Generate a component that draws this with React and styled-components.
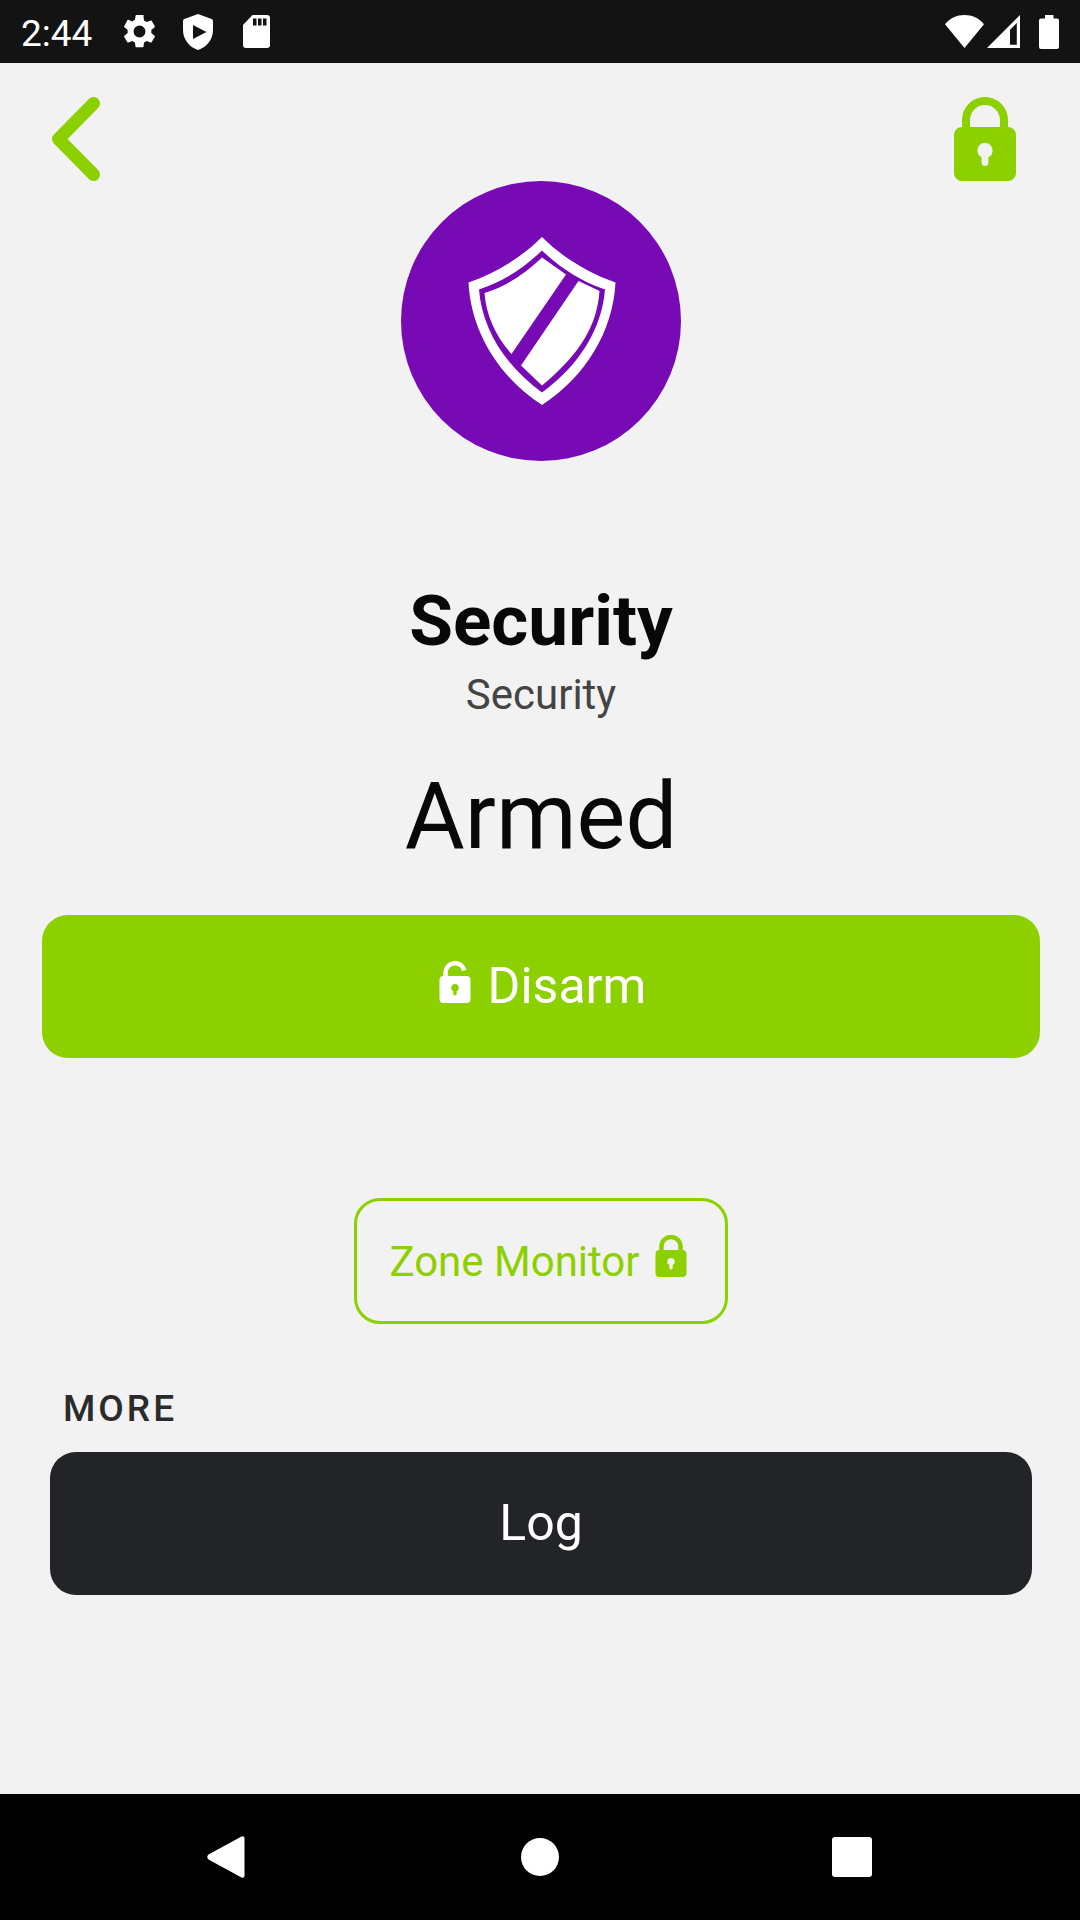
import React from "react";
import styled, { createGlobalStyle, css } from "styled-components";

const GlobalStyle = createGlobalStyle`
  * {
    box-sizing: border-box;
  }

  body {
    margin: 0;
    background: #f2f2f2;
    font-family: Roboto, "Liberation Sans", sans-serif;
  }

  button {
    font-family: inherit;
    border: none;
    padding: 0;
    background: none;
    cursor: pointer;
  }

  svg {
    display: block;
    flex-shrink: 0;
  }
`;

const Page = styled.div`
  min-height: 100vh;
  display: flex;
  flex-direction: column;
`;

const StatusBar = styled.header`
  height: 63px;
  padding: 0 21px;
  display: flex;
  justify-content: space-between;
  align-items: center;
  background: #131313;
  color: white;
`;

const StatusGroup = styled.div`
  display: flex;
  align-items: center;
  gap: ${({ $gap }) => $gap}px;
`;

const Clock = styled.time`
  font-size: 37px;
  line-height: 44px;
  padding-top: 4px;
  margin-right: 4px;
`;

const Content = styled.main`
  flex: 1;
  display: flex;
  flex-direction: column;
  align-items: center;
  padding: 34px 40px 40px 42px;
`;

const TopBar = styled.div`
  width: 100%;
  padding: 0 24px 0 10px;
  display: flex;
  justify-content: space-between;
`;

const IconButton = styled.button`
  color: #8dd000;
`;

const DeviceBadge = styled.div`
  width: 280px;
  height: 280px;
  padding-left: 2px;
  border-radius: 50%;
  background: #780ab5;
  color: white;
  display: flex;
  justify-content: center;
  align-items: center;
`;

const Title = styled.h1`
  margin: 118px 0 0;
  font-size: 71px;
  line-height: 84px;
  font-weight: 700;
  color: #080808;
`;

const Subtitle = styled.div`
  font-size: 42px;
  line-height: 50px;
  margin-top: 7px;
  color: #444444;
`;

const Status = styled.div`
  font-size: 92px;
  line-height: 110px;
  margin-top: 42px;
  color: #080808;
`;

const Button = styled.button`
  width: 100%;
  height: 143px;
  padding-bottom: 2px;
  border-radius: 26px;
  display: flex;
  justify-content: center;
  align-items: center;
  gap: 17px;
  font-size: 50px;
  line-height: 58px;
  color: white;

  svg {
    margin-bottom: 8px;
  }

  ${({ $dark }) =>
    $dark
      ? css`
          background: #232427;
        `
      : css`
          background: #8dd000;
          margin-top: 43px;
          padding-left: 3px;
        `}
`;

const ZoneButton = styled.button`
  height: 126px;
  margin-top: 140px;
  padding: 2px 38px 0 32px;
  border: 3px solid #8dd000;
  border-radius: 26px;
  display: flex;
  align-items: center;
  gap: 15px;
  font-size: 42px;
  line-height: 50px;
  color: #8dd000;

  svg {
    margin-bottom: 12px;
  }
`;

const MoreSection = styled.section`
  width: 100%;
  padding: 0 8px;
  margin-top: 64px;
`;

const SectionTitle = styled.h2`
  margin: 0 0 22px;
  padding-left: 13px;
  font-size: 37px;
  line-height: 42px;
  font-weight: 500;
  letter-spacing: 3px;
  text-transform: uppercase;
  color: #2b2b2b;
`;

const NavBar = styled.nav`
  height: 126px;
  display: grid;
  grid-template-columns: repeat(3, 312px);
  justify-content: center;
  background: black;
  color: white;
`;

const NavButton = styled.button`
  color: white;
  display: flex;
  justify-content: center;
  align-items: center;
`;

const GearIcon = () => (
  <svg width="33" height="33" viewBox="2 2 20 20" fill="currentColor">
    <path d="M19.14 12.94c.04-.3.06-.61.06-.94s-.02-.64-.07-.94l2.03-1.58a.49.49 0 0 0 .12-.61l-1.92-3.32a.49.49 0 0 0-.59-.22l-2.39.96a7 7 0 0 0-1.62-.94l-.36-2.54A.48.48 0 0 0 13.92 2h-3.84a.48.48 0 0 0-.47.41l-.36 2.54c-.59.24-1.13.57-1.62.94l-2.39-.96a.48.48 0 0 0-.59.22L2.74 8.87a.48.48 0 0 0 .12.61l2.03 1.58c-.05.3-.09.63-.09.94s.02.64.07.94l-2.03 1.58a.49.49 0 0 0-.12.61l1.92 3.32c.12.22.37.29.59.22l2.39-.96c.5.38 1.03.7 1.62.94l.36 2.54c.05.24.24.41.48.41h3.84c.24 0 .44-.17.47-.41l.36-2.54c.59-.24 1.13-.56 1.62-.94l2.39.96c.22.08.47 0 .59-.22l1.92-3.32a.48.48 0 0 0-.12-.61zM12 15.6a3.6 3.6 0 1 1 0-7.2 3.6 3.6 0 0 1 0 7.2z" />
  </svg>
);

const PlayShieldIcon = () => (
  <svg width="30" height="36" viewBox="0 0 30 36">
    <path
      d="M15 0 28.600 5Q30 5.600 30 7V16C30 26 23 33.500 15 36 7 33.500 0 26 0 16V7Q0 5.600 1.400 5z"
      fill="currentColor"
    />
    <path d="M10 11v14l13.500-7z" fill="#131313" />
  </svg>
);

const SdCardIcon = () => (
  <svg width="33" height="33" viewBox="-3 0 33 33">
    <path
      d="M9.500 0H24a3 3 0 0 1 3 3v27a3 3 0 0 1-3 3H3a3 3 0 0 1-3-3V10z"
      fill="currentColor"
    />
    <path d="M10 3.500h3.500v7H10zM15 3.500h3.500v7H15zM20 3.500h3.500v7H20z" fill="#131313" />
  </svg>
);

const WifiIcon = () => (
  <svg width="39" height="33" viewBox="0 0 39 33" fill="currentColor">
    <path d="M19.500 33 0 9.200C5 3 12 0 19.500 0S34 3 39 9.200z" />
  </svg>
);

const SignalIcon = () => (
  <svg width="33" height="33" viewBox="0 0 33 33" fill="currentColor" fillRule="evenodd">
    <path d="M33 0v33H0zM29.800 8 23 14.800V29.800H29.800z" />
  </svg>
);

const BatteryIcon = () => (
  <svg width="20" height="34" viewBox="0 0 20 34" fill="currentColor">
    <path d="M6 0h8.500v3.500H18a2 2 0 0 1 2 2V32a2 2 0 0 1-2 2H2a2 2 0 0 1-2-2V5.500a2 2 0 0 1 2-2h4z" />
  </svg>
);

const BackIcon = () => (
  <svg width="48" height="84" viewBox="0 0 48 84" fill="none">
    <path
      d="M41.500 6.500 6.500 42 41.500 77.500"
      stroke="currentColor"
      strokeWidth="13"
      strokeLinecap="round"
      strokeLinejoin="round"
    />
  </svg>
);

const LockIcon = ({ width, height, open, weight = 8 }) => (
  <svg width={width} height={height} viewBox="0 0 62 84" fill="currentColor">
    <path
      fillRule="evenodd"
      d="M8 30H54a8 8 0 0 1 8 8V76a8 8 0 0 1-8 8H8a8 8 0 0 1-8-8V38a8 8 0 0 1 8-8zM31 46a7.500 7.500 0 0 0-3.400 14.200V65.500a3.400 3.400 0 0 0 6.800 0V60.200A7.500 7.500 0 0 0 31 46z"
    />
    <path
      d={open ? "M12 32V23A19 19 0 0 1 49.500 19" : "M12 32V23a19 19 0 0 1 38 0V32"}
      fill="none"
      stroke="currentColor"
      strokeWidth={weight}
    />
  </svg>
);

const ShieldIcon = () => (
  <svg width="148" height="168" viewBox="0 0 148 168" fill="currentColor">
    <path
      fillRule="evenodd"
      d="M74 0C94 20 120 36 147.500 45.500C145 95 117 140 74 168C31 140 3 95 .5 45.500C28 36 54 20 74 0zM74 13.500C57 30 35 45 11 52.500C14 91 36 128 74 155.500C112 128 134 91 137 52.500C114 45 92 31 74 13.500z"
    />
    <path d="M74 20.500 98 37.500 43.500 117C28 100 18 78 16.500 56C38 49 56 38 74 20.500z" />
    <path d="M110.500 44 131.500 54C129 88 113 116 74 148.500L53 128.500z" />
  </svg>
);

function App() {
  return (
    <>
      <GlobalStyle />
      <Page>
        <StatusBar>
          <StatusGroup $gap={27}>
            <Clock>2:44</Clock>
            <GearIcon />
            <PlayShieldIcon />
            <SdCardIcon />
          </StatusGroup>
          <StatusGroup $gap={19}>
            <StatusGroup $gap={3}>
              <WifiIcon />
              <SignalIcon />
            </StatusGroup>
            <BatteryIcon />
          </StatusGroup>
        </StatusBar>

        <Content>
          <TopBar>
            <IconButton aria-label="Back">
              <BackIcon />
            </IconButton>
            <IconButton aria-label="Locked">
              <LockIcon width={62} height={84} />
            </IconButton>
          </TopBar>

          <DeviceBadge>
            <ShieldIcon />
          </DeviceBadge>
          <Title>Security</Title>
          <Subtitle>Security</Subtitle>
          <Status>Armed</Status>

          <Button>
            <LockIcon width={32} height={42} weight={9} open />
            Disarm
          </Button>

          <ZoneButton>
            Zone Monitor
            <LockIcon width={32} height={42} weight={9} />
          </ZoneButton>

          <MoreSection>
            <SectionTitle>More</SectionTitle>
            <Button $dark>Log</Button>
          </MoreSection>
        </Content>

        <NavBar>
          <NavButton aria-label="Back">
            <svg width="42" height="42" viewBox="0 0 42 42" fill="currentColor">
              <path d="M1.500 18.500 34.500.5Q37.500-.5 37.500 2.500V39.500Q37.500 42.500 34.500 41.500L1.500 23.500Q-1 21 1.500 18.500z" />
            </svg>
          </NavButton>
          <NavButton aria-label="Home">
            <svg width="38" height="38" viewBox="0 0 38 38" fill="currentColor">
              <circle cx="19" cy="19" r="19" />
            </svg>
          </NavButton>
          <NavButton aria-label="Recent apps">
            <svg width="40" height="40" viewBox="0 0 40 40" fill="currentColor">
              <rect width="40" height="40" rx="3" />
            </svg>
          </NavButton>
        </NavBar>
      </Page>
    </>
  );
}

export default App;
